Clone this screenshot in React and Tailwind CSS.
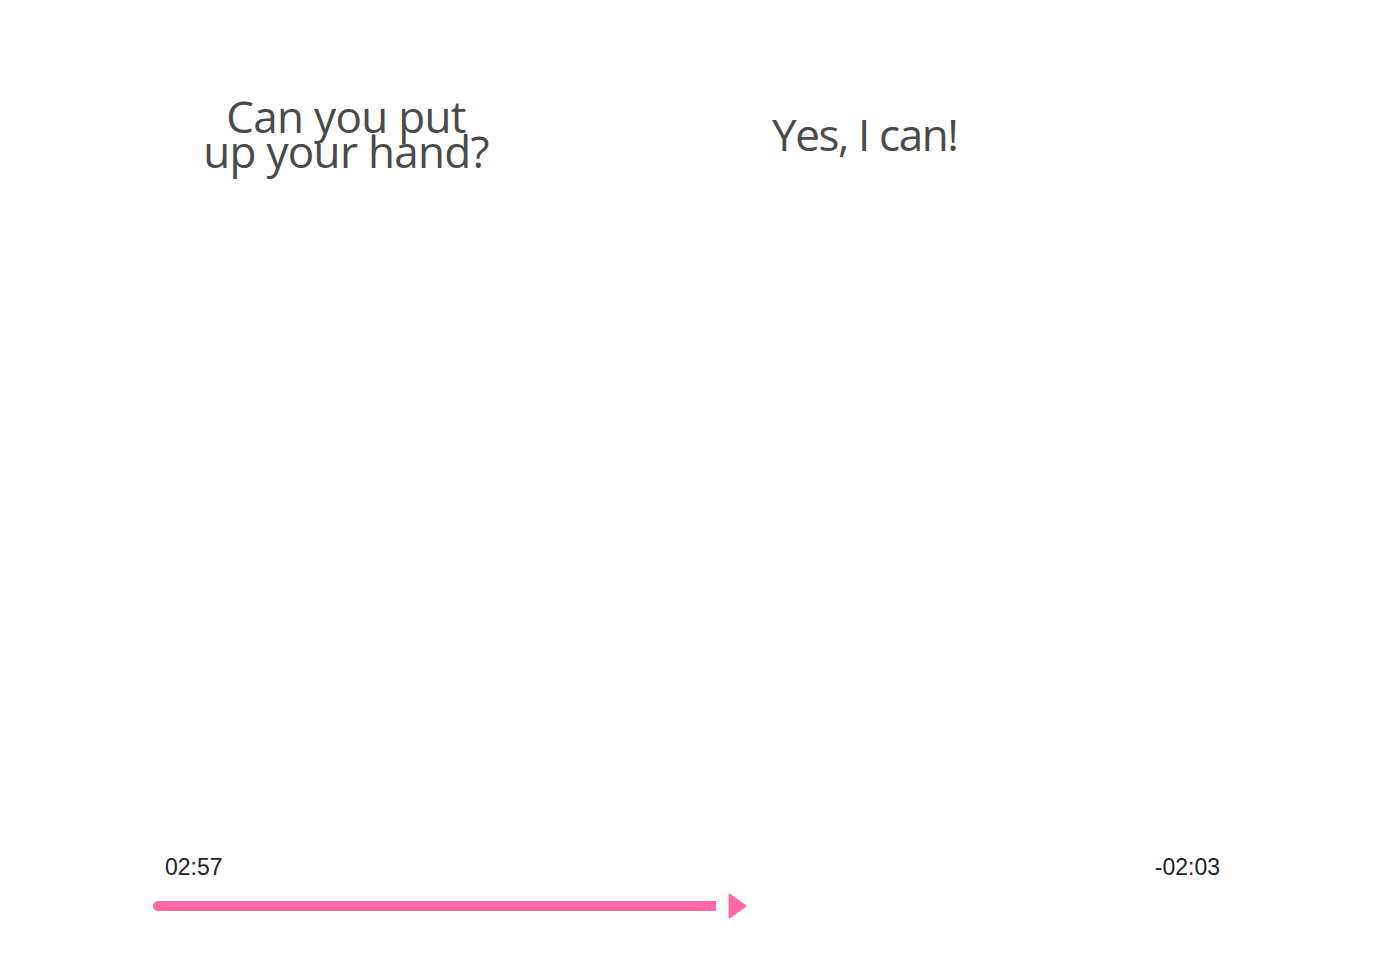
export default function App() {
  return (
    <div className="flex h-[963px] w-full flex-col bg-white">
      <div className="flex items-start pt-[99px]">
        <h2 className="ml-[186px] w-[320px] text-center font-['Open_Sans',sans-serif] text-[44px] font-normal leading-[35px] tracking-[-0.7px] text-[#4a4a4a]">
          Can you put
          <br />
          up your hand?
        </h2>
        <h2 className="ml-[266px] mt-[13px] font-['Open_Sans',sans-serif] text-[44px] font-normal leading-[44px] tracking-[-1.4px] text-[#4a4a4a]">
          Yes, I can!
        </h2>
      </div>

      <div className="mx-[153px] mt-auto mb-[44px]">
        <div className="flex items-center justify-between pl-3 pr-[10px] font-['Liberation_Sans',Arial,sans-serif] text-[23px] leading-[26px] text-[#222]">
          <span>02:57</span>
          <span>-02:03</span>
        </div>
        <div className="mt-[13px] flex items-center">
          <div className="h-[10px] w-[563px] rounded-l-full bg-[#ff69a7]" />
          <svg width="19" height="26" viewBox="0 0 19 26" className="ml-[12px]">
            <path d="M1.5 1.5 L17.5 13 L1.5 24.5 Z" fill="#ff69a7" stroke="#ff69a7" strokeWidth="2" strokeLinejoin="round" />
          </svg>
        </div>
      </div>
    </div>
  );
}
